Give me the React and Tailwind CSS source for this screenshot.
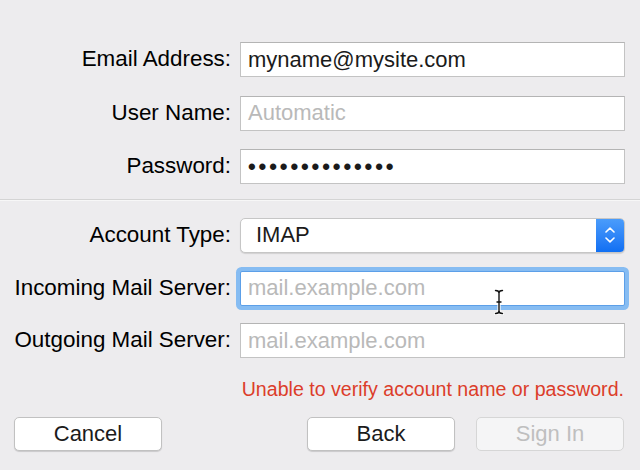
import React from 'react'

const font = "font-['Liberation_Sans',Arial,sans-serif]"

function Row({ label, children, className = '' }) {
  return (
    <div className={`flex items-center ${className}`}>
      <div className="w-[231px] shrink-0 text-right text-[22.4px] leading-none whitespace-nowrap">{label}</div>
      <div className="ml-[9px] w-[385px] shrink-0">{children}</div>
    </div>
  )
}

function Field({ value, placeholder, focused = false, dots = false }) {
  return (
    <div
      className={`h-[35px] bg-white flex items-center px-[7px] border ${
        focused
          ? 'border-[#5c9fe8] rounded-[2px] shadow-[0_0_0_4px_#86bcf2]'
          : 'border-[#c3c3c3] border-t-[#b4b4b4]'
      }`}
    >
      {value ? (
        <span className={`leading-none text-[#1b1b1b] ${dots ? 'tracking-[2.9px] font-bold' : ''}`}>{value}</span>
      ) : (
        <span className="leading-none text-[#b9b9b9]">{placeholder}</span>
      )}
    </div>
  )
}

function Popup({ value }) {
  return (
    <div className="h-[35px] flex rounded-[5px] bg-white border border-[#c6c6c6] shadow-[0_1px_1px_rgba(0,0,0,0.12)] overflow-hidden">
      <div className="flex-1 flex items-center pl-[15px] leading-none text-[#1b1b1b]">{value}</div>
      <div className="w-[28px] bg-gradient-to-b from-[#4a9cfb] to-[#0f6ff3] flex flex-col items-center justify-center gap-[4px]">
        <svg width="10" height="6" viewBox="0 0 10 6" fill="none">
          <path d="M1 5 L5 1.2 L9 5" stroke="white" strokeWidth="1.6" strokeLinecap="round" strokeLinejoin="round" />
        </svg>
        <svg width="10" height="6" viewBox="0 0 10 6" fill="none">
          <path d="M1 1 L5 4.8 L9 1" stroke="white" strokeWidth="1.6" strokeLinecap="round" strokeLinejoin="round" />
        </svg>
      </div>
    </div>
  )
}

function Btn({ children, disabled = false, className = '' }) {
  return (
    <button
      type="button"
      className={`h-[34px] w-[148px] rounded-[5px] border leading-none ${
        disabled
          ? 'bg-[#f5f5f6] border-[#d6d6d6] text-[#bfbfbf]'
          : 'bg-white border-[#c1c1c1] text-[#1b1b1b] shadow-[0_1px_1px_rgba(0,0,0,0.15)]'
      } ${className}`}
    >
      {children}
    </button>
  )
}

export default function App() {
  return (
    <div className={`relative w-[640px] h-[470px] overflow-hidden bg-[#edecee] text-[22px] ${font}`}>
      <div className="pt-[42px] flex flex-col">
        <Row label="Email Address:">
          <Field value="myname@mysite.com" />
        </Row>
        <Row label="User Name:" className="mt-[18.5px]">
          <Field placeholder="Automatic" />
        </Row>
        <Row label="Password:" className="mt-[18.5px]">
          <Field value="••••••••••••••" dots />
        </Row>

        <div className="mt-[14.5px] h-px bg-[#d4d4d4]" />
        <div className="h-px bg-[#f7f7f7]" />

        <Row label="Account Type:" className="mt-[17px]">
          <Popup value="IMAP" />
        </Row>
        <Row label="Incoming Mail Server:" className="mt-[18px]">
          <Field placeholder="mail.example.com" focused />
        </Row>
        <Row label="Outgoing Mail Server:" className="mt-[17.5px]">
          <Field placeholder="mail.example.com" />
        </Row>

        <div className="mt-[20px] pr-[16px] text-right text-[19.6px] leading-[22px] text-[#dc3d2a]">
          Unable to verify account name or password.
        </div>

        <div className="mt-[17px] flex pl-[14px] pr-[16px]">
          <Btn>Cancel</Btn>
          <div className="flex-1" />
          <Btn>Back</Btn>
          <Btn disabled className="ml-[21px]">Sign In</Btn>
        </div>
      </div>

      <svg className="absolute left-[494px] top-[289px]" width="10" height="26" viewBox="0 0 10 26" fill="none">
        <path d="M1.5 1.5 Q5 1.5 5 4 L5 22 Q5 24.5 1.5 24.5 M8.5 1.5 Q5 1.5 5 4 M5 22 Q5 24.5 8.5 24.5 M3 13 L7 13" stroke="white" strokeWidth="3.2" strokeLinecap="round" />
        <path d="M1.5 1.5 Q5 1.5 5 4 L5 22 Q5 24.5 1.5 24.5 M8.5 1.5 Q5 1.5 5 4 M5 22 Q5 24.5 8.5 24.5 M3 13 L7 13" stroke="#111" strokeWidth="1.4" strokeLinecap="round" />
      </svg>
    </div>
  )
}
